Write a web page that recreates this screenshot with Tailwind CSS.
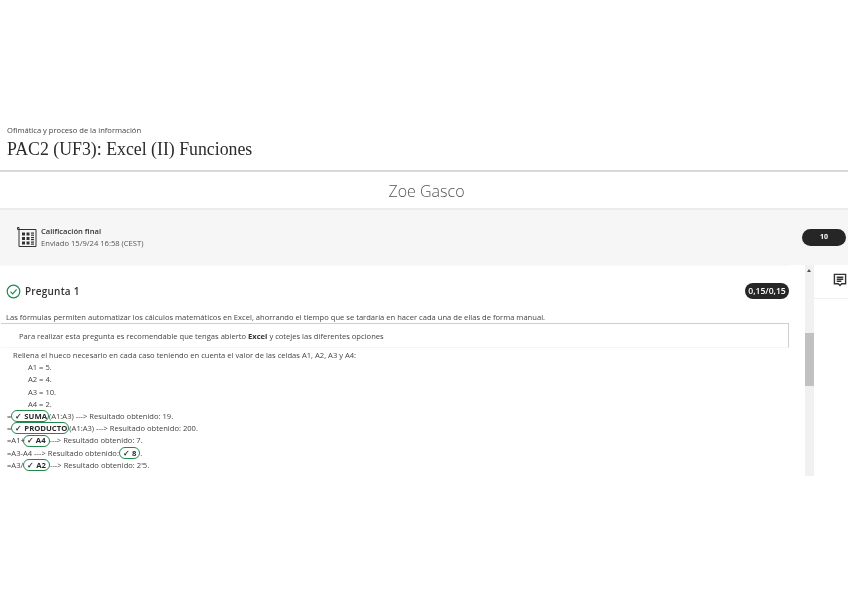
<!DOCTYPE html>
<html lang="es">
<head>
<meta charset="utf-8">
<script src="https://cdn.jsdelivr.net/npm/@tailwindcss/browser@4"></script>
</head>
<body class="bg-white">
<div class="w-[848px] h-[599px] overflow-hidden bg-white font-['Open_Sans',sans-serif] text-[#333] blur-[0.45px]">
  <header class="h-[172px] pt-[125px] pl-[7px] border-b-2 border-[#d9d9d9]">
    <p class="text-[7.6px] leading-[11px] text-[#444]">Ofimática y proceso de la información</p>
    <h1 class="mt-[2px] font-['Liberation_Serif',serif] text-[17.8px] leading-[23px] text-[#2b2b2b]">PAC2 (UF3): Excel (II) Funciones</h1>
  </header>
  <div class="h-[38px] flex items-center justify-center pl-[5px] pt-[1px] border-b-2 border-[#ececec] text-[16px] font-light text-[#555]">Zoe Gasco</div>
  <section class="h-[55px] bg-[#f6f6f6] flex items-center pl-[16px] pr-[2px]">
    <svg class="w-[21px] h-[22px] shrink-0 -mt-[1px]" viewBox="0 0 21 22" fill="none" stroke="#333" stroke-width="1">
      <path d="M3 1.5H1.5V3.5H3M3 1.5V20.5H20V3.5H3"/>
      <g fill="#333" stroke="none">
        <rect x="6" y="6.5" width="3" height="3"/><rect x="10.5" y="6.5" width="3" height="3"/><rect x="15" y="6.5" width="3" height="1.2"/><rect x="15" y="8.6" width="3" height="1.2"/>
        <rect x="6" y="11" width="3" height="3"/><rect x="10.5" y="11" width="3" height="3"/><rect x="15" y="11" width="3" height="1.2"/><rect x="15" y="13" width="3" height="1.2"/>
        <rect x="6" y="15.5" width="3" height="3"/><rect x="10.5" y="15.5" width="3" height="3"/><rect x="15" y="15.5" width="3" height="1.2"/><rect x="15" y="17.5" width="3" height="1.2"/>
      </g>
    </svg>
    <div class="ml-[4px] text-[7.6px] leading-[12px] -mt-[1px]">
      <p class="font-semibold text-[#333]">Calificación final</p>
      <p class="text-[#555]">Enviado 15/9/24 16:58 (CEST)</p>
    </div>
    <span class="ml-auto w-[44px] h-[17px] rounded-full bg-[#262626] text-white text-[7px] font-bold flex items-center justify-center">10</span>
  </section>
  <div class="h-[211px] flex">
    <main class="w-[788px] ml-[1px] pt-[7px] shrink-0 overflow-hidden border-t border-[#f7f7f7]">
      <div class="h-[36px] flex items-center pl-[5px]">
        <svg class="w-[15px] h-[15px] shrink-0" viewBox="0 0 15 15" fill="none" stroke="#1f8a4c" stroke-width="1.2">
          <circle cx="7.5" cy="7.5" r="6.3"/><path d="M4.5 7.7L6.7 9.9L10.6 5.4"/>
        </svg>
        <h2 class="ml-[4px] text-[10px] font-semibold tracking-[0.2px] text-[#333]">Pregunta 1</h2>
        <span class="ml-auto w-[44px] h-[16px] rounded-full bg-[#262626] text-white text-[8.6px] font-semibold flex items-center justify-center">0,15/0,15</span>
      </div>
      <p class="mt-[2px] pl-[5px] text-[7.6px] leading-[12px] text-[#444]">Las fórmulas permiten automatizar los cálculos matemáticos en Excel, ahorrando el tiempo que se tardaría en hacer cada una de ellas de forma manual.</p>
      <div class="h-[25px] pt-[2px] border-t border-r border-[#cfcfcf] pl-[18px] flex items-center text-[7.6px] text-[#444] border-b-[#f5f5f5] border-b">
        <p>Para realizar esta pregunta es recomendable que tengas abierto <b class="font-bold text-[#333]">Excel</b> y cotejes las diferentes opciones</p>
      </div>
      <div class="text-[7.6px] leading-[12.2px] text-[#444] pt-[1px]">
        <p class="pl-[12px]">Rellena el hueco necesario en cada caso teniendo en cuenta el valor de las celdas A1, A2, A3 y A4:</p>
        <p class="pl-[27px]">A1 = 5.</p>
        <p class="pl-[27px]">A2 = 4.</p>
        <p class="pl-[27px]">A3 = 10.</p>
        <p class="pl-[27px]">A4 = 2.</p>
        <p class="pl-[6px] flex items-center">=<span class="inline-flex items-center h-[12px] pl-[3px] pr-[1px] rounded-[6px] border border-[#1f8a4c] font-bold text-[7.7px] text-[#2b2b2b]">✓ SUMA</span>(A1:A3) ---&gt; Resultado obtenido: 19.</p>
        <p class="pl-[6px] flex items-center">=<span class="inline-flex items-center h-[12px] pl-[3px] pr-[1px] rounded-[6px] border border-[#1f8a4c] font-bold text-[7.7px] text-[#2b2b2b]">✓ PRODUCTO</span>(A1:A3) ---&gt; Resultado obtenido: 200.</p>
        <p class="pl-[6px] flex items-center">=A1+<span class="-ml-[2px] inline-flex items-center h-[12px] px-[3px] rounded-[6px] border border-[#1f8a4c] font-bold text-[7.7px] text-[#2b2b2b]">✓ A4</span>---&gt; Resultado obtenido: 7.</p>
        <p class="pl-[6px] flex items-center">=A3-A4 ---&gt; Resultado obtenido: <span class="inline-flex items-center h-[12px] px-[3px] rounded-[6px] border border-[#1f8a4c] font-bold text-[7.7px] text-[#2b2b2b]">✓ 8</span>.</p>
        <p class="pl-[6px] flex items-center">=A3/<span class="inline-flex items-center h-[12px] px-[3px] rounded-[6px] border border-[#1f8a4c] font-bold text-[7.7px] text-[#2b2b2b]">✓ A2</span>---&gt; Resultado obtenido: 2'5.</p>
      </div>
    </main>
    <div class="ml-[16px] w-[9px] shrink-0 bg-[#f1f1f1] relative">
      <span class="absolute left-[2px] top-[4px] w-0 h-0 border-x-[2.5px] border-x-transparent border-b-[3px] border-b-[#555]"></span>
      <span class="absolute left-0 top-[68px] w-full h-[53px] bg-[#c1c1c1]"></span>
    </div>
    <aside class="flex-1">
      <div class="h-[34px] border-b border-[#f0f0f0] flex items-center justify-center pl-[17px] pb-[3px]">
        <svg class="w-[14px] h-[14px]" viewBox="0 0 15 15" fill="none" stroke="#333" stroke-width="1.5">
          <path d="M1.5 1.5H13.5V11.5H9.3L7.5 13.3L5.7 11.5H1.5Z"/><path d="M4 4.5H11M4 6.7H11M4 8.9H9"/>
        </svg>
      </div>
    </aside>
  </div>
</div>
</body>
</html>
